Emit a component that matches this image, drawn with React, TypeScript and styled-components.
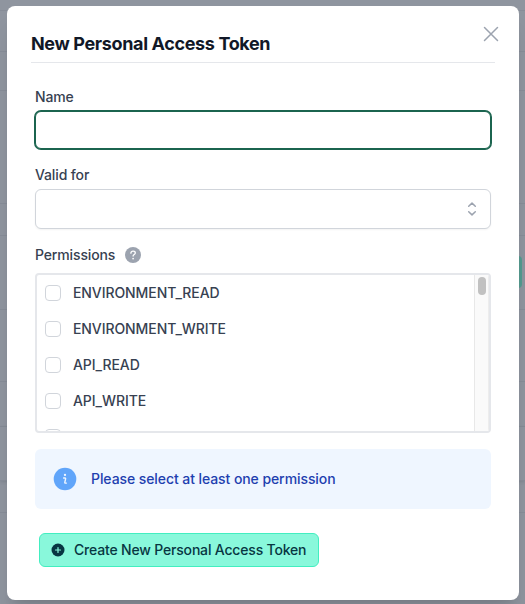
import React from "react";
import styled, { createGlobalStyle } from "styled-components";

const GlobalStyle = createGlobalStyle`
  *, *::before, *::after { box-sizing: border-box; }
  html, body, #root { height: 100%; }
  body {
    margin: 0;
    overflow: hidden;
    font-family: Inter, "Liberation Sans", sans-serif;
    font-size: 14px;
    line-height: 20px;
    color: #374151;
  }
`;

const Page = styled.div`
  position: relative;
  width: 525px;
  height: 604px;
  padding: 6px 6px 4px 7px;
  overflow: hidden;
  background: #8f959f;
`;

const Backdrop = styled.div`
  position: absolute;
  inset: 0;
  display: flex;
  flex-direction: column;
`;

const BackdropRow = styled.div<{ $height: number; $shade?: boolean }>`
  flex: none;
  height: ${(p) => p.$height}px;
  border-bottom: 1px solid #878d98;
  box-shadow: ${(p) => (p.$shade ? "0 1px 3px rgba(60, 68, 80, 0.18)" : "none")};
`;

const BackdropButton = styled.div`
  position: absolute;
  top: 256px;
  right: 3px;
  width: 60px;
  height: 32px;
  border-radius: 4px;
  background: #559b90;
`;

const Dialog = styled.section`
  position: relative;
  width: 512px;
  height: 594px;
  padding: 24px;
  border-radius: 8px;
  background: #fff;
  box-shadow: 0 20px 25px -5px rgba(0, 0, 0, 0.1), 0 8px 10px -6px rgba(0, 0, 0, 0.1);
`;

const CloseButton = styled.button`
  position: absolute;
  top: 16px;
  right: 16px;
  width: 24px;
  height: 24px;
  padding: 0;
  border: 0;
  background: none;
  color: #9ca3af;
  svg { display: block; }
`;

const Header = styled.header`
  height: 33px;
  border-bottom: 1px solid #e5e7eb;
`;

const Title = styled.h3`
  margin: 0;
  font-size: 18px;
  font-weight: 700;
  line-height: 28px;
  letter-spacing: -0.36px;
  color: #111827;
`;

const Form = styled.form`
  display: flex;
  flex-direction: column;
  padding: 24px 4px 0;
`;

const Field = styled.div`
  display: flex;
  flex-direction: column;
  gap: 4px;
  margin-bottom: 16px;
`;

const Label = styled.label`
  display: flex;
  align-items: center;
  gap: 10px;
  height: 20px;
  font-weight: 500;
  letter-spacing: -0.13px;
`;

const TextInput = styled.input`
  height: 38px;
  padding: 8px 12px;
  border: 1px solid #1b644f;
  border-radius: 6px;
  outline: none;
  background: #fff;
  box-shadow: 0 0 0 1px #1b644f;
  font: inherit;
`;

const Select = styled.div`
  display: flex;
  align-items: center;
  justify-content: flex-end;
  height: 40px;
  padding-right: 8px;
  border: 1px solid #d1d5db;
  border-radius: 6px;
  background: #fff;
  box-shadow: 0 1px 2px rgba(0, 0, 0, 0.05);
  color: #9ca3af;
`;

const PermissionBox = styled.div`
  display: flex;
  height: 160px;
  margin-top: 4px;
  border: 2px solid #e5e7eb;
  border-radius: 4px;
  overflow: hidden;
`;

const PermissionList = styled.div`
  flex: 1;
  overflow: hidden;
`;

const PermissionRow = styled.label`
  display: flex;
  align-items: center;
  gap: 12px;
  height: 36px;
  padding-left: 8px;
  font-weight: 500;
  letter-spacing: -0.08px;
`;

const Checkbox = styled.input`
  appearance: none;
  width: 16px;
  height: 16px;
  margin: 0;
  border: 1px solid #d1d5db;
  border-radius: 4px;
  background: #fff;
`;

const ScrollTrack = styled.div`
  width: 15px;
  padding: 2px 3px;
  border-left: 1px solid #e8e8e8;
  border-right: 1px solid #ededed;
  background: #fafafa;
`;

const ScrollThumb = styled.div`
  width: 8px;
  height: 18px;
  border-radius: 4px;
  background: #c1c1c1;
`;

const Notice = styled.div`
  display: flex;
  align-items: center;
  gap: 14px;
  height: 60px;
  padding-left: 18px;
  border-radius: 6px;
  background: #eff6ff;
  color: #1e40af;
  font-weight: 500;
  letter-spacing: -0.08px;
`;

const SubmitButton = styled.button`
  display: flex;
  align-items: center;
  align-self: flex-start;
  gap: 9px;
  width: 280px;
  height: 34px;
  margin: 24px 0 0 4px;
  padding: 0 0 0 11px;
  border: 1px solid #42eec0;
  border-radius: 6px;
  background: #89f8db;
  color: #073642;
  font: inherit;
  font-weight: 500;
  letter-spacing: -0.18px;
  white-space: nowrap;
`;

const rows = [11, 41, 39, 113, 32, 74, 72, 45];
const permissions = ["ENVIRONMENT_READ", "ENVIRONMENT_WRITE", "API_READ", "API_WRITE"];

export default function App() {
  return (
    <>
      <GlobalStyle />
      <Page>
        <Backdrop>
          {rows.map((height, i) => (
            <BackdropRow key={i} $height={height} />
          ))}
          <BackdropRow $height={54} $shade />
          <BackdropRow $height={32} />
          <BackdropButton />
        </Backdrop>
        <Dialog role="dialog" aria-label="New Personal Access Token">
          <CloseButton aria-label="Close">
            <svg width="24" height="24" viewBox="0 0 24 24" fill="none" stroke="currentColor" strokeWidth="1.5" strokeLinecap="round">
              <path d="M5.5 5.5 18.5 18.5M18.5 5.5 5.5 18.5" />
            </svg>
          </CloseButton>
          <Header>
            <Title>New Personal Access Token</Title>
          </Header>
          <Form>
            <Field>
              <Label htmlFor="name">Name</Label>
              <TextInput id="name" />
            </Field>
            <Field>
              <Label>Valid for</Label>
              <Select role="combobox" aria-label="Valid for">
                <svg width="20" height="20" viewBox="0 0 20 20" fill="none" stroke="currentColor" strokeWidth="1.5" strokeLinecap="round" strokeLinejoin="round">
                  <path d="M6.7 7.2 10 4.1 13.3 7.2M6.7 12.8 10 15.9 13.3 12.8" />
                </svg>
              </Select>
            </Field>
            <Field>
              <Label as="div">
                Permissions
                <svg width="16" height="16" viewBox="0 0 16 16">
                  <circle cx="8" cy="8" r="8" fill="#9ca3af" />
                  <path d="M5.9 6.1C6 4.8 6.9 4.1 8.1 4.1c1.3 0 2.2.7 2.2 1.8 0 1.5-2.2 1.6-2.2 3.2" fill="none" stroke="#fff" strokeWidth="1.3" strokeLinecap="round" />
                  <circle cx="8.1" cy="11.6" r=".85" fill="#fff" />
                </svg>
              </Label>
              <PermissionBox>
                <PermissionList>
                  {permissions.map((name) => (
                    <PermissionRow key={name}>
                      <Checkbox type="checkbox" />
                      {name}
                    </PermissionRow>
                  ))}
                  <PermissionRow>
                    <Checkbox type="checkbox" />
                  </PermissionRow>
                </PermissionList>
                <ScrollTrack>
                  <ScrollThumb />
                </ScrollTrack>
              </PermissionBox>
            </Field>
            <Notice>
              <svg width="24" height="24" viewBox="0 0 24 24">
                <circle cx="12" cy="12" r="11.3" fill="#60a5fa" />
                <circle cx="12" cy="7.9" r="1.15" fill="#eff6ff" />
                <path d="M10.6 11h1.5c.4 0 .6.4.5.8l-.8 3.5c-.1.5.1.8.5.8h1.1" fill="none" stroke="#eff6ff" strokeWidth="1.4" strokeLinecap="round" />
              </svg>
              Please select at least one permission
            </Notice>
            <SubmitButton type="button">
              <svg width="14" height="14" viewBox="0 0 14 14">
                <circle cx="7" cy="7" r="6.5" fill="#073642" />
                <path d="M7 4.5v5M4.5 7h5" stroke="#89f8db" strokeWidth="1.2" strokeLinecap="round" />
              </svg>
              Create New Personal Access Token
            </SubmitButton>
          </Form>
        </Dialog>
      </Page>
    </>
  );
}
